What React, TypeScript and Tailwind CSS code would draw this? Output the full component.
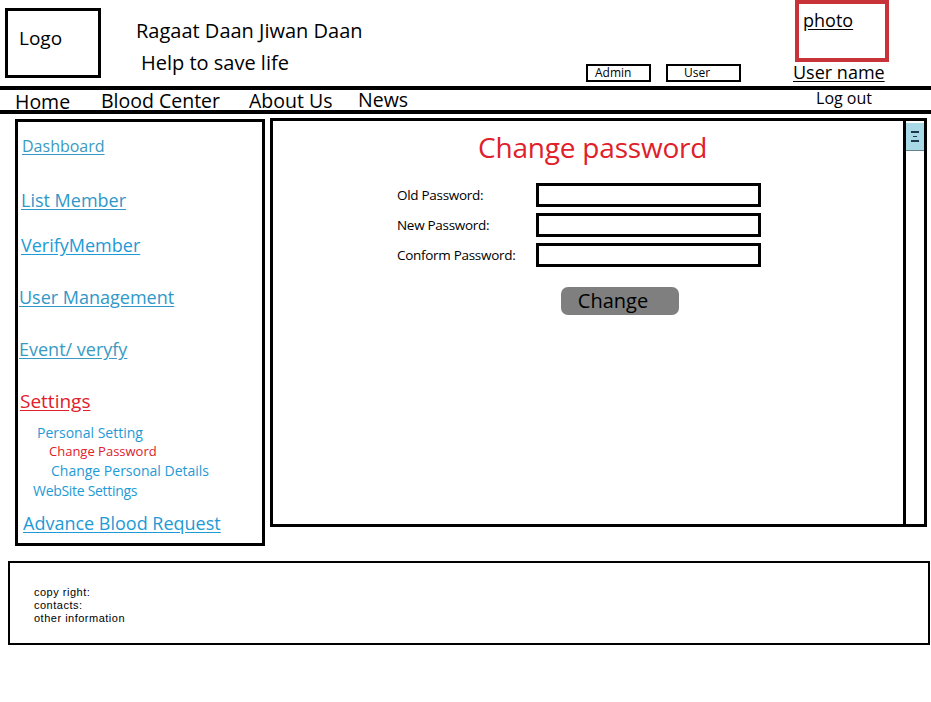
import React from 'react';

const font = { fontFamily: '"Open Sans", "Noto Sans", Arial, sans-serif' };
const smallFont = { fontFamily: '"Liberation Sans", Arial, sans-serif' };

function SideLink({ children, className }: { children: React.ReactNode; className: string }) {
  return <a className={`block underline underline-offset-2 leading-none ${className}`}>{children}</a>;
}

function Field({ label }: { label: string }) {
  return (
    <div className="flex items-center h-[24px]">
      <span className="w-[139px] text-[13.5px] text-black tracking-[-0.3px]">{label}</span>
      <div className="w-[225px] h-[24px] border-[3px] border-black bg-white" />
    </div>
  );
}

export default function App() {
  return (
    <div className="w-[931px] h-[702px] bg-white text-black overflow-hidden" style={font}>
      {/* Header */}
      <div className="flex h-[86px]">
        <div className="ml-[5px] mt-[8px] w-[96px] h-[70px] border-[3px] border-black pl-[11px] pt-[14px] text-[19px] leading-[26px]">
          Logo
        </div>
        <div className="ml-[35px] w-[450px] pt-[17px]">
          <div className="text-[20px] leading-[28px]">Ragaat Daan Jiwan Daan</div>
          <div className="ml-[5px] mt-[4px] text-[20px] leading-[28px]">Help to save life</div>
        </div>
        <div className="mt-[64px] w-[65px] h-[18px] border-[2px] border-black text-[12px] leading-[14px] pl-[7px]">
          Admin
        </div>
        <div className="ml-[15px] mt-[64px] w-[75px] h-[18px] border-[2px] border-black text-[12px] leading-[14px] pl-[16px]">
          User
        </div>
        <div className="ml-[52px] flex flex-col">
          <div className="ml-[2px] w-[94px] h-[62px] border-[4px] border-[#c8333a] pl-[4px] pt-[5px] text-[18px] leading-[22px]">
            <span className="underline underline-offset-2">photo</span>
          </div>
          <div className="text-[18px] leading-[20px] underline underline-offset-2">User name</div>
        </div>
      </div>
      <div className="h-[4px] bg-black" />
      {/* Nav */}
      <div className="flex h-[20px] items-center text-[19.5px] leading-[20px]">
        <span className="ml-[15px] w-[86px] mt-[3px]">Home</span>
        <span className="w-[148px] mt-[1px]">Blood Center</span>
        <span className="w-[109px] mt-[1px]">About Us</span>
        <span className="-mt-[1px]">News</span>
        <span className="ml-auto mr-[59px] text-[16px] -mt-[5px]">Log out</span>
      </div>
      <div className="h-[4px] bg-black" />
      {/* Body */}
      <div className="flex mt-[5px]">
        <div className="ml-[15px] w-[250px] h-[427px] border-[3px] border-black">
          <div className="pt-[16px] flex flex-col">
            <SideLink className="ml-[4px] text-[16px] text-[#3a9ac2]">Dashboard</SideLink>
            <SideLink className="ml-[3px] mt-[37px] text-[18px] text-[#2f98c9]">List Member</SideLink>
            <SideLink className="ml-[3px] mt-[27px] text-[18px] text-[#1e9ad6]">VerifyMember</SideLink>
            <SideLink className="ml-[1px] mt-[34px] text-[18px] text-[#2f98c9]">User Management</SideLink>
            <SideLink className="ml-[1px] mt-[34px] text-[18px] text-[#3a9ac2]">Event/ veryfy</SideLink>
            <SideLink className="ml-[2px] mt-[34px] text-[19px] text-[#e0202a]">Settings</SideLink>
            <span className="ml-[19px] mt-[12px] text-[14px] leading-[19px] text-[#1e9ad6]">Personal Setting</span>
            <span className="ml-[31px] text-[13px] leading-[19px] text-[#e0202a]">Change Password</span>
            <span className="ml-[33px] text-[14px] leading-[20px] text-[#1e9ad6]">Change Personal Details</span>
            <span className="ml-[15px] text-[14px] leading-[19px] text-[#1e9ad6] tracking-[-0.3px]">WebSite Settings</span>
            <SideLink className="ml-[5px] mt-[14px] text-[18px] text-[#1e9ad6]">Advance Blood Request</SideLink>
          </div>
        </div>
        <div className="ml-[5px] -mt-[1px] w-[657px] h-[409px] border-[3px] border-black flex">
          <div className="flex-1 flex flex-col">
            <h1 className="mt-[6px] ml-[205px] text-[28px] leading-[40px] text-[#e0202a] tracking-[-0.2px]">Change password</h1>
            <div className="mt-[16px] ml-[124px] flex flex-col gap-[6px]">
              <Field label="Old Password:" />
              <Field label="New Password:" />
              <Field label="Conform Password:" />
            </div>
            <button className="mt-[20px] ml-[288px] w-[118px] h-[28px] rounded-[7px] bg-[#7f7f7f] pr-[14px] text-[20px] leading-[26px] text-black">
              Change
            </button>
          </div>
          <div className="w-[21px] border-l-[3px] border-black flex flex-col">
            <div className="mt-[2px] h-[28px] bg-[#a9d8e6] border-b border-black/40 flex flex-col items-center justify-center gap-[3px]">
              <div className="w-[8px] h-[1.5px] bg-[#1a3a4a]" />
              <div className="w-[4px] h-[1.5px] bg-[#1a3a4a]" />
              <div className="w-[8px] h-[1.5px] bg-[#1a3a4a]" />
            </div>
          </div>
        </div>
      </div>
      {/* Footer */}
      <div
        className="ml-[8px] mt-[15px] w-[922px] h-[84px] border-[2px] border-black pl-[24px] pt-[23px] text-[11px] leading-[13px] tracking-[0.5px]"
        style={smallFont}
      >
        <div>copy right:</div>
        <div>contacts:</div>
        <div>other information</div>
      </div>
    </div>
  );
}
